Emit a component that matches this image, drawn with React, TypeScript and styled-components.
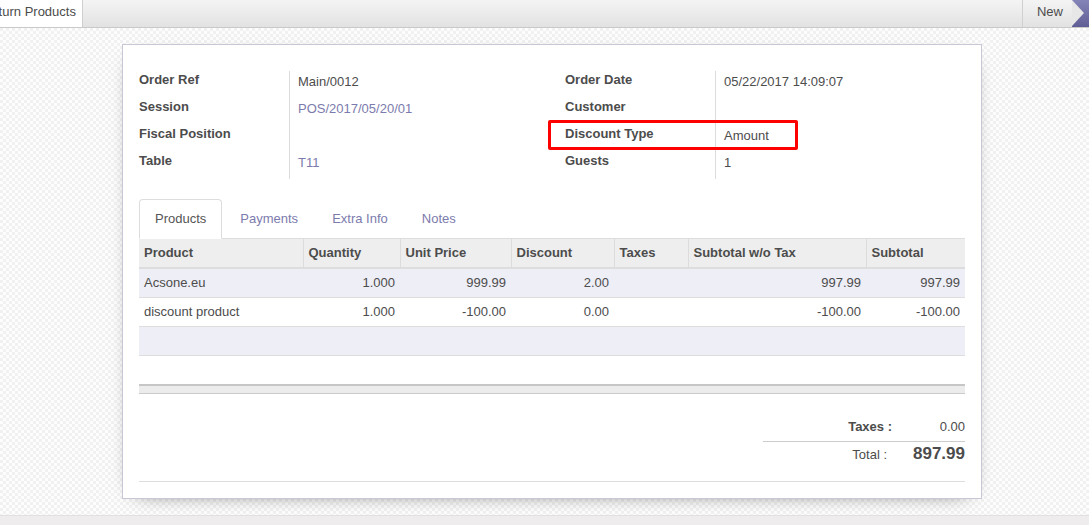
import React from 'react';
import styled, { createGlobalStyle } from 'styled-components';

const GlobalStyle = createGlobalStyle`
  html, body { margin: 0; padding: 0; }
  body {
    font-family: "Liberation Sans", Arial, sans-serif;
    font-size: 13px;
    line-height: 18px;
    color: #4c4c4c;
    background: #fff;
  }
  * { box-sizing: border-box; }
`;

const Page = styled.div`
  width: 1089px;
  height: 525px;
  display: flex;
  flex-direction: column;
  overflow: hidden;
`;

const TopBar = styled.div`
  height: 28px;
  flex: none;
  display: flex;
  justify-content: space-between;
  background: linear-gradient(#f4f4f4, #e2e2e2);
  border-bottom: 1px solid #c9c9c9;
  overflow: hidden;
`;

const ActionButton = styled.div`
  margin-left: -28px;
  padding: 3px 6px 0 10px;
  background: #fff;
  border-right: 1px solid #cfcfcf;
  color: #4c4c4c;
  white-space: nowrap;
`;

const StatusGroup = styled.div`
  display: flex;
`;

const StatusButton = styled.div`
  position: relative;
  padding: 3px 9px 0 14px;
  border-left: 1px solid #d0d0d0;
  color: #4c4c4c;
  white-space: nowrap;
  z-index: 1;
  &::after {
    content: '';
    position: absolute;
    top: 0;
    right: -12px;
    border-top: 13.5px solid transparent;
    border-bottom: 13.5px solid transparent;
    border-left: 12px solid #e7e7e7;
  }
`;

const StatusActive = styled.div`
  width: 17px;
  background: linear-gradient(#8584b8, #5f5d95);
`;

const Content = styled.div`
  flex: 1;
  padding: 16px 0 0 122px;
  background-color: #f7f7f7;
  background-image: conic-gradient(#fdfdfd 25%, #f1f1f1 0 50%, #fdfdfd 0 75%, #f1f1f1 0);
  background-size: 6px 6px;
`;

const Sheet = styled.div`
  width: 860px;
  background: #fff;
  border: 1px solid #c8c7d5;
  box-shadow: 0 5px 20px -15px #000;
  padding: 26px 16px 16px 16px;
`;

const Groups = styled.div`
  display: grid;
  grid-template-columns: 400px 400px;
  column-gap: 26px;
`;

const Group = styled.div`
  position: relative;
  display: grid;
  grid-template-columns: 151px 1fr;
  grid-auto-rows: 27px;
`;

const Label = styled.div`
  font-weight: bold;
  border-right: 1px solid #dcdcdc;
  padding-top: 0;
`;

const Value = styled.div<{ $link?: boolean }>`
  padding: 2px 0 0 8px;
  color: ${(p) => (p.$link ? '#7c7bad' : '#4c4c4c')};
`;

const Highlight = styled.div`
  position: absolute;
  left: -17px;
  top: 49px;
  width: 250px;
  height: 30px;
  border: 3px solid #ff0000;
  border-radius: 2px;
  pointer-events: none;
`;

const Tabs = styled.ul`
  list-style: none;
  margin: 20px 0 0 0;
  padding: 0;
  display: flex;
  border-bottom: 1px solid #dddddd;
`;

const Tab = styled.li<{ $active?: boolean }>`
  margin: 0 2px -1px 0;
  padding: 10px 15px;
  border: 1px solid ${(p) => (p.$active ? '#dddddd' : 'transparent')};
  border-bottom-color: ${(p) => (p.$active ? '#ffffff' : 'transparent')};
  border-radius: 4px 4px 0 0;
  background: ${(p) => (p.$active ? '#fff' : 'transparent')};
  color: ${(p) => (p.$active ? '#555555' : '#7c7bad')};
`;

const Table = styled.table`
  width: 826px;
  border-collapse: collapse;
  table-layout: fixed;
`;

const Th = styled.th`
  background: #eeeeee;
  font-weight: bold;
  text-align: left;
  padding: 5px 5px;
  border-left: 1px solid #dcdcdc;
  border-bottom: 2px solid #dddddd;
  &:first-child { border-left: none; }
`;

const Tr = styled.tr<{ $striped?: boolean }>`
  background: ${(p) => (p.$striped ? '#eeeef6' : '#ffffff')};
  border-top: 1px solid #dddddd;
`;

const Td = styled.td<{ $num?: boolean }>`
  padding: 5px 5px;
  text-align: ${(p) => (p.$num ? 'right' : 'left')};
  white-space: nowrap;
`;

const FootCell = styled.td`
  height: 8px;
  padding: 0;
  background: #ececec;
  border-top: 2px solid #c6c6c6;
  border-bottom: 1px solid #cbcbcb;
`;

const Totals = styled.div`
  margin: 24px 0 0 auto;
  width: 202px;
  display: grid;
  grid-template-columns: 129px 73px;
`;

const TotLabel = styled.div<{ $main?: boolean }>`
  text-align: right;
  font-weight: ${(p) => (p.$main ? 'normal' : 'bold')};
  padding: ${(p) => (p.$main ? '4px 5px 0 0' : '0 0 5px 0')};
  border-top: ${(p) => (p.$main ? '1px solid #cccccc' : 'none')};
`;

const TotValue = styled.div<{ $main?: boolean }>`
  text-align: right;
  font-weight: ${(p) => (p.$main ? 'bold' : 'normal')};
  font-size: ${(p) => (p.$main ? '17px' : '13px')};
  line-height: ${(p) => (p.$main ? '24px' : '18px')};
  padding: ${(p) => (p.$main ? '0' : '0 0 5px 0')};
  border-top: ${(p) => (p.$main ? '1px solid #cccccc' : 'none')};
`;

const Divider = styled.div`
  margin-top: 15px;
  border-top: 1px solid #dddddd;
`;

const BottomBar = styled.div`
  height: 10px;
  flex: none;
  background: #eeecec;
  border-top: 1px solid #e2e0e0;
`;

const cols = [164, 97, 111, 103, 74, 178, 99];
const heads = ['Product', 'Quantity', 'Unit Price', 'Discount', 'Taxes', 'Subtotal w/o Tax', 'Subtotal'];

const rows = [
  ['Acsone.eu', '1.000', '999.99', '2.00', '', '997.99', '997.99'],
  ['discount product', '1.000', '-100.00', '0.00', '', '-100.00', '-100.00'],
];

export default function App() {
  return (
    <>
      <GlobalStyle />
      <Page>
        <TopBar>
          <ActionButton>Return Products</ActionButton>
          <StatusGroup>
            <StatusButton>New</StatusButton>
            <StatusActive />
          </StatusGroup>
        </TopBar>
        <Content>
          <Sheet>
            <Groups>
              <Group>
                <Label>Order Ref</Label>
                <Value>Main/0012</Value>
                <Label>Session</Label>
                <Value $link>POS/2017/05/20/01</Value>
                <Label>Fiscal Position</Label>
                <Value />
                <Label>Table</Label>
                <Value $link>T11</Value>
              </Group>
              <Group>
                <Label>Order Date</Label>
                <Value>05/22/2017 14:09:07</Value>
                <Label>Customer</Label>
                <Value />
                <Label>Discount Type</Label>
                <Value>Amount</Value>
                <Label>Guests</Label>
                <Value>1</Value>
                <Highlight />
              </Group>
            </Groups>
            <Tabs>
              <Tab $active>Products</Tab>
              <Tab>Payments</Tab>
              <Tab>Extra Info</Tab>
              <Tab>Notes</Tab>
            </Tabs>
            <Table>
              <colgroup>
                {cols.map((w, i) => (
                  <col key={i} style={{ width: w }} />
                ))}
              </colgroup>
              <thead>
                <tr>
                  {heads.map((h) => (
                    <Th key={h}>{h}</Th>
                  ))}
                </tr>
              </thead>
              <tbody>
                {rows.map((r, i) => (
                  <Tr key={i} $striped={i % 2 === 0}>
                    {r.map((c, j) => (
                      <Td key={j} $num={j > 0}>{c}</Td>
                    ))}
                  </Tr>
                ))}
                <Tr $striped>
                  <Td colSpan={7}>{'\u00a0'}</Td>
                </Tr>
                <Tr>
                  <Td colSpan={7}>{'\u00a0'}</Td>
                </Tr>
              </tbody>
              <tfoot>
                <tr>
                  <FootCell colSpan={7} />
                </tr>
              </tfoot>
            </Table>
            <Totals>
              <TotLabel>Taxes :</TotLabel>
              <TotValue>0.00</TotValue>
              <TotLabel $main>Total :</TotLabel>
              <TotValue $main>897.99</TotValue>
            </Totals>
            <Divider />
          </Sheet>
        </Content>
        <BottomBar />
      </Page>
    </>
  );
}
